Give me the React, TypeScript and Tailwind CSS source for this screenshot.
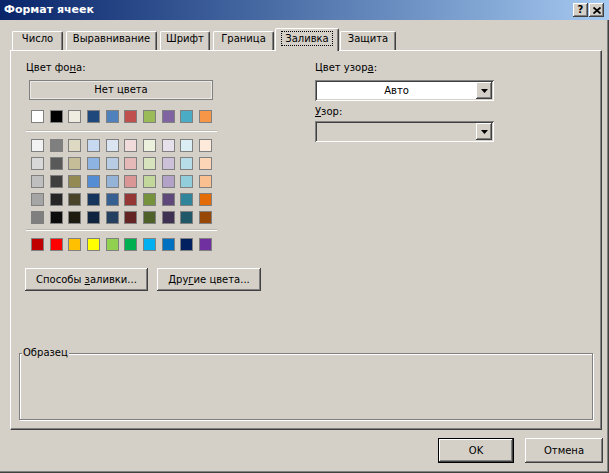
import React from "react";

// Win classic bevels
const raised =
  "shadow-[inset_-1px_-1px_#404040,inset_1px_1px_#ffffff,inset_-2px_-2px_#808080,inset_2px_2px_#d4d0c8]";
const sunken =
  "shadow-[inset_1px_1px_#808080,inset_-1px_-1px_#ffffff,inset_2px_2px_#404040,inset_-2px_-2px_#d4d0c8]";

const topRow = [
  "#ffffff", "#000000", "#eeece1", "#1f497d", "#4f81bd",
  "#c0504d", "#9bbb59", "#8064a2", "#4bacc6", "#f79646",
];

const shades = [
  ["#f2f2f2", "#7f7f7f", "#ddd9c3", "#c6d9f0", "#dbe5f1", "#f2dcdb", "#ebf1dd", "#e5e0ec", "#dbeef3", "#fdeada"],
  ["#d8d8d8", "#595959", "#c4bd97", "#8db3e2", "#b8cce4", "#e5b9b7", "#d7e3bc", "#ccc1d9", "#b7dde8", "#fbd5b5"],
  ["#bfbfbf", "#3f3f3f", "#938953", "#548dd4", "#95b3d7", "#d99694", "#c3d69b", "#b2a2c7", "#92cddc", "#fac08f"],
  ["#a5a5a5", "#262626", "#494429", "#17365d", "#366092", "#953734", "#76923c", "#5f497a", "#31859b", "#e36c09"],
  ["#7f7f7f", "#0c0c0c", "#1d1b10", "#0f243e", "#244061", "#632423", "#4f6128", "#3f3151", "#205867", "#974806"],
];

const standard = [
  "#c00000", "#ff0000", "#ffc000", "#ffff00", "#92d050",
  "#00b050", "#00b0f0", "#0070c0", "#002060", "#7030a0",
];

const tabs = [
  { label: "Число", cls: "w-[51px] mr-[3px]" },
  { label: "Выравнивание", cls: "w-[91px] mr-[3px]" },
  { label: "Шрифт", cls: "w-[50px] mr-[3px]" },
  { label: "Граница", cls: "w-[61px] mr-[3px]" },
  { label: "Заливка", cls: "w-[64px] mr-[1px]", active: true },
  { label: "Защита", cls: "w-[56px]" },
];

const SwatchRow: React.FC<{ colors: string[] }> = ({ colors }) => (
  <div className="ml-[5px] w-[181px] flex justify-between">
    {colors.map((c, i) => (
      <div
        key={i}
        className="w-[13px] h-[13px] border border-[#808080]"
        style={{ backgroundColor: c }}
      />
    ))}
  </div>
);

const Arrow = () => (
  <svg width="7" height="4" viewBox="0 0 7 4">
    <path d="M0 0H7L3.5 4Z" fill="#000" />
  </svg>
);

const Combo: React.FC<{ value?: string; white?: boolean; className?: string }> = ({
  value,
  white,
  className,
}) => (
  <div
    className={`h-[21px] flex items-center p-[2px] ${sunken} ${
      white ? "bg-white" : "bg-[#d4d0c8]"
    } ${className ?? ""}`}
  >
    <div className="flex-1 text-center leading-[12px]">{value}</div>
    <div className={`w-[16px] h-[17px] flex items-center justify-center bg-[#d4d0c8] ${raised}`}>
      <Arrow />
    </div>
  </div>
);

export default function App() {
  return (
    <div
      className="w-[609px] h-[473px] bg-[#d4d0c8] flex flex-col text-black text-[10px] leading-[12px] overflow-hidden shadow-[inset_-1px_-1px_#404040,inset_-2px_-2px_#808080]"
      style={{ fontFamily: '"DejaVu Sans", Verdana, sans-serif' }}
    >
      {/* title bar */}
      <div className="h-[20px] flex items-center pl-[4px] pr-[5px] bg-gradient-to-r from-[#0a246a] to-[#a6caf0]">
        <span className="flex-1 text-white font-bold text-[11px]">Формат ячеек</span>
        <div className={`w-[15px] h-[14px] mr-[1px] bg-[#d4d0c8] flex items-center justify-center font-bold text-[10px] ${raised}`}>
          ?
        </div>
        <div className={`w-[15px] h-[14px] bg-[#d4d0c8] flex items-center justify-center ${raised}`}>
          <svg width="8" height="7" viewBox="0 0 8 7">
            <path d="M0.5 0.5L7.5 6.5M7.5 0.5L0.5 6.5" stroke="#000" strokeWidth="1.8" />
          </svg>
        </div>
      </div>

      {/* tabs */}
      <div className="mt-[8px] h-[22px] ml-[12px] flex items-end">
        {tabs.map((t) =>
          t.active ? (
            <div
              key={t.label}
              className={`${t.cls} ml-[-2px] mr-[1px] h-[23px] mb-[-1px] relative z-10 bg-[#d4d0c8] flex justify-center pt-[2px] border-l border-t border-white border-r border-r-[#404040] rounded-tl-[2px] rounded-tr-[2px] shadow-[inset_-1px_0_#808080]`}
            >
              <span className="h-[15px] px-[3px] leading-[13px] border border-dotted border-black">
                {t.label}
              </span>
            </div>
          ) : (
            <div
              key={t.label}
              className={`${t.cls} h-[19px] flex justify-center pt-[1px] border-l border-t border-white border-r border-r-[#404040] rounded-tl-[2px] rounded-tr-[2px] shadow-[inset_-1px_0_#808080]`}
            >
              {t.label}
            </div>
          )
        )}
      </div>

      {/* panel */}
      <div className="ml-[10px] w-[592px] h-[380px] flex flex-col border-l border-t border-white border-r border-b border-r-[#404040] border-b-[#404040] shadow-[inset_-1px_-1px_#808080]">
        <div className="flex pt-[11px] pl-[15px]">
          <div className="w-[191px] shrink-0 flex flex-col">
            <div className="h-[12px]">
              Цвет фо<span className="underline">н</span>а:
            </div>
            <div className="mt-[6px] ml-[3px] w-[184px] h-[20px] flex items-center justify-center border border-[#808080] shadow-[inset_1px_1px_#ebe9e4,inset_-1px_-1px_#ebe9e4]">
              Нет цвета
            </div>
            <div className="mt-[10px]">
              <SwatchRow colors={topRow} />
            </div>
            <div className="mt-[7px] h-[2px] border-t border-[#bcb8b0] bg-white" />
            <div className="mt-[7px] flex flex-col gap-[5px]">
              {shades.map((row, i) => (
                <SwatchRow key={i} colors={row} />
              ))}
            </div>
            <div className="mt-[5px] h-[2px] border-t border-[#bcb8b0] bg-white" />
            <div className="mt-[7px]">
              <SwatchRow colors={standard} />
            </div>
            <div className="mt-[17px] ml-[-1px] w-max flex gap-[9px] whitespace-nowrap">
              <div className={`w-[123px] h-[23px] shrink-0 flex items-center justify-center ${raised}`}>
                <span>
                  Способы <span className="underline">з</span>аливки...
                </span>
              </div>
              <div className={`w-[104px] h-[23px] shrink-0 flex items-center justify-center ${raised}`}>
                <span>
                  Дру<span className="underline">г</span>ие цвета...
                </span>
              </div>
            </div>
          </div>

          <div className="ml-[98px] w-[179px] shrink-0 flex flex-col">
            <div className="h-[12px]">
              Цвет узор<span className="underline">а</span>:
            </div>
            <Combo className="mt-[6px]" white value="Авто" />
            <div className="mt-[5px] h-[12px]">
              <span className="underline">У</span>зор:
            </div>
            <Combo className="mt-[3px]" />
          </div>
        </div>

        <div className="mt-auto mx-[8px] mb-[9px] h-[67px] relative border border-[#808080] shadow-[inset_1px_1px_#ffffff,1px_1px_#ffffff]">
          <span className="absolute top-[-7px] left-[2px] px-[1px] bg-[#d4d0c8] leading-[12px]">
            Образец
          </span>
        </div>
      </div>

      {/* dialog buttons */}
      <div className="mt-[8px] flex justify-end gap-[11px] pr-[6px]">
        <div className="w-[76px] h-[25px] border border-black flex">
          <div className={`flex-1 flex items-center justify-center ${raised}`}>OK</div>
        </div>
        <div className={`w-[78px] h-[25px] flex items-center justify-center ${raised}`}>Отмена</div>
      </div>
    </div>
  );
}
